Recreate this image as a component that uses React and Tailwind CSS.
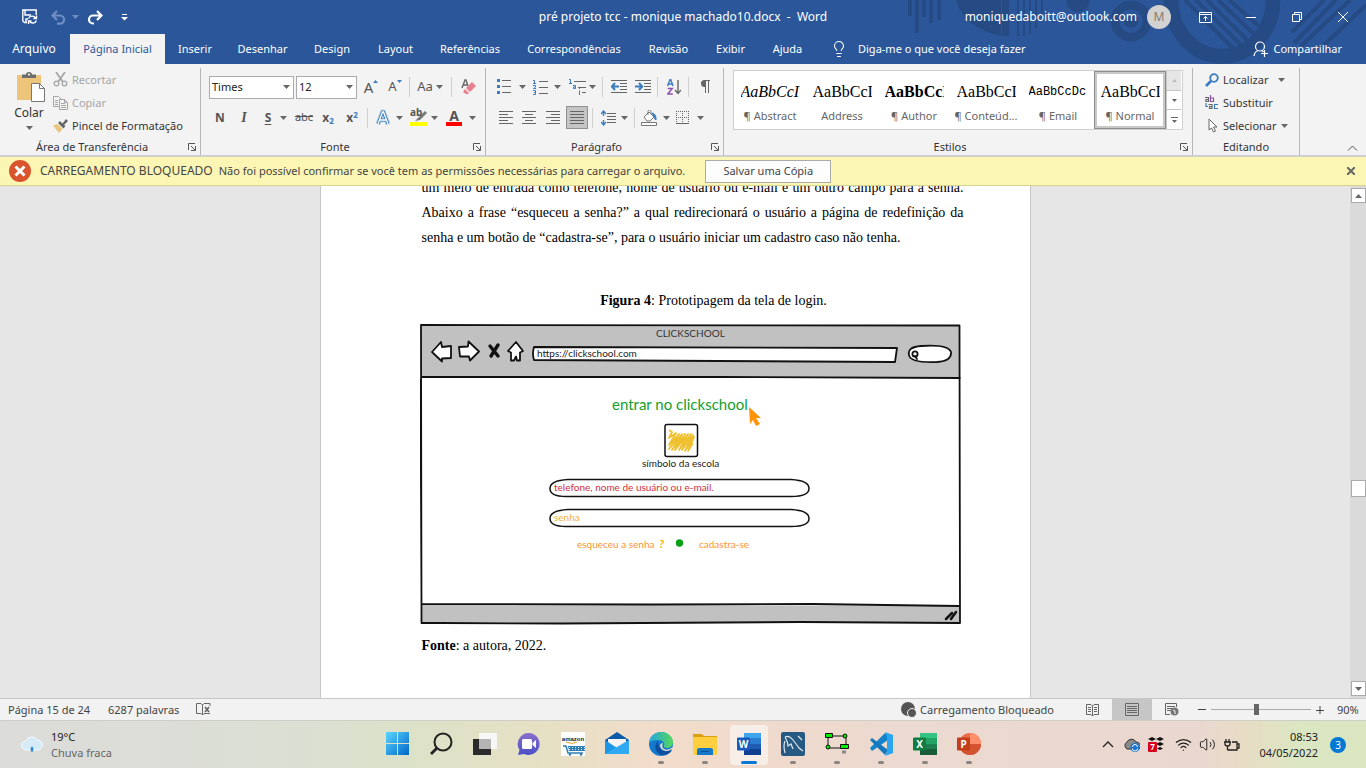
import React from "react";
import { Lightbulb, Search, Wifi, Volume2 } from "lucide-react";

const Caret = ({ dim }) => (
  <svg width="7" height="4" viewBox="0 0 7 4" className={dim ? "shrink-0 fill-[#6f8fc4]" : "shrink-0 fill-[#666]"} aria-hidden="true"><path d="M0 0h7L3.5 4z" /></svg>
);
const Sep = ({ className }) => <div className={`h-5 w-px bg-[#d0d0d0] ${className || ""}`} />;
const Tool = ({ label, className, children }) => (
  <button type="button" aria-label={label} className={`flex h-[23px] shrink-0 items-center justify-center [&>svg]:shrink-0 ${className || ""}`}>{children}</button>
);
const Launcher = () => (
  <button type="button" aria-label="Mais opções" className="flex w-4 justify-center">
    <svg width="8" height="8" viewBox="0 0 8 8" fill="none" stroke="#555"><path d="M.5 7V.5H7M3 3l4 4M7.5 3v4.5H3" /></svg>
  </button>
);

function Group({ title, width, launcher, children }) {
  return (
    <section className={`flex shrink-0 flex-col border-r border-[#b5b5b5] ${width}`}>
      <div className="h-[71px]">{children}</div>
      <div className="flex h-4 items-center">
        <h2 className="flex-1 text-center text-[11px] leading-4 text-[#333]">{title}</h2>
        {launcher && <Launcher />}
      </div>
    </section>
  );
}

function TitleBar() {
  return (
    <div className="grid h-[34px] grid-cols-[1fr_auto_1fr] items-center text-[12px] leading-4">
      <div className="flex items-center pl-[22px]">
        <button type="button" aria-label="Salvar">
          <svg width="16" height="16" viewBox="0 0 16 16" fill="none" stroke="#fff" strokeWidth="1.400"><path d="M5 13.500H2.500L.8 12V1h13.400v5M3 1v5h6M4 13.500V10h2" /><path d="M6.500 9.500a4 4 0 0 1 7-.5M14.500 6.500v3h-3M14.500 11.500a4 4 0 0 1-7 .8M6.500 15v-3h3" /></svg>
        </button>
        <button type="button" aria-label="Desfazer" className="ml-[13px] flex items-center gap-[5px]">
          <svg width="16" height="15" viewBox="0 0 16 15" fill="none" stroke="#6f8fc4" strokeWidth="2.200"><path d="M6 1 1.500 5.500 6 10M2 5.500h7a4 4 0 0 1 0 8.200H6" /></svg>
          <Caret dim />
        </button>
        <button type="button" aria-label="Refazer" className="ml-2">
          <svg width="16" height="15" viewBox="0 0 16 15" fill="none" stroke="#fff" strokeWidth="2.200"><path d="m10 1 4.500 4.500L10 10M14 5.500H6a4 4 0 0 0 0 8h1" /></svg>
        </button>
        <button type="button" aria-label="Personalizar" className="ml-[18px]">
          <svg width="7" height="7" viewBox="0 0 7 7" fill="#fff"><path d="M1 0h5v1H1zM0 3h7L3.500 6.500z" /></svg>
        </button>
      </div>
      <div className="whitespace-pre">pré projeto tcc - monique machado10.docx  -  Word</div>
      <div className="flex items-center justify-end">
        <span>moniquedaboitt@outlook.com</span>
        <span className="ml-[10px] flex size-6 items-center justify-center rounded-full bg-[#d2d2d2] text-[#8a7a6c]">M</span>
        <button type="button" aria-label="Opções da faixa" className="ml-[11px] flex h-8 w-[46px] items-center justify-center">
          <svg width="13" height="11" viewBox="0 0 13 11" fill="none" stroke="#fff"><path d="M.5.5h12v10H.5zM.5 2.500h12M6.500 9V4.500M4.500 6.500l2-2 2 2" /></svg>
        </button>
        <button type="button" aria-label="Minimizar" className="flex h-8 w-[46px] items-center justify-center">
          <svg width="10" height="1"><path d="M0 .5h10" stroke="#fff" /></svg>
        </button>
        <button type="button" aria-label="Restaurar" className="flex h-8 w-[46px] items-center justify-center">
          <svg width="10" height="10" fill="none" stroke="#fff"><path d="M.5 2.500h7v7h-7zM2.500 2.500v-2h7v7h-2" /></svg>
        </button>
        <button type="button" aria-label="Fechar" className="flex h-8 w-[46px] items-center justify-center">
          <svg width="10" height="10" fill="none" stroke="#fff"><path d="m0 0 10 10M10 0 0 10" /></svg>
        </button>
      </div>
    </div>
  );
}

const tabs = [
  ["Arquivo", "w-[70px] pr-0.5 text-[12px]"], ["Página Inicial", "w-[95px] bg-[#f3f3f3] text-[#2b579a]"], ["Inserir", "w-[60px]"], ["Desenhar", "w-[75px]"],
  ["Design", "w-[64px]"], ["Layout", "w-[63px]"], ["Referências", "w-[86px]"], ["Correspondências", "w-[122px]"],
  ["Revisão", "w-[67px]"], ["Exibir", "w-[57px]"], ["Ajuda", "w-[57px]"],
];

function Header() {
  return (
    <header className="relative shrink-0 overflow-hidden bg-[#2b579a] text-white">
      <svg className="absolute top-0 right-0" width="466" height="64" viewBox="900 0 466 64" aria-hidden="true" fill="#264b84">
        <path d="M908 0h4v16h-4zM915 0h4v33h-4zM922 0h4v17h-4zM929 0h4v23h-4zM937 0h4v20h-4zM956 0h45v36q-37-8-45-36zM1002 0h7v36h-7zM1017 0h2v36h-2zM1023 0h2v36h-2zM1029 0h2v34h-2zM1035 0h2v28h-2zM1041 0h2v19h-2zM1066 0h24q-2 12-12 12T1066 0z" />
        <circle cx="1131" cy="21" r="16" fill="none" stroke="#264b84" strokeWidth="9" /><circle cx="1131" cy="21" r="7" />
        <path d="M1171 0a49 54 0 1 0 102 0" fill="none" stroke="#264b84" strokeWidth="15" />
        <path d="m1185 0 54 54M1196 0l49 49M1207 0l43 43M1218 0l38 36M1229 0l30 26M1324 0l-32 32M1350 0l-49 46M1366 5l-42 40M1336 0l-42 43" stroke="#264b84" strokeWidth="4" />
      </svg>
      <div className="relative">
        <TitleBar />
        <nav className="flex h-[30px] text-[11px] leading-4">
          {tabs.map(([name, cls]) => <button key={name} type="button" className={`flex items-center justify-center whitespace-nowrap ${cls}`}>{name}</button>)}
          <button type="button" className="flex items-center gap-2.5 pl-3.5 whitespace-nowrap"><Lightbulb size={18} strokeWidth={1.400} />Diga-me o que você deseja fazer</button>
          <button type="button" className="mr-6 ml-auto flex items-center gap-1">
            <svg width="16" height="16" viewBox="0 0 16 16" fill="none" stroke="#fff" strokeWidth="1.200"><circle cx="7" cy="5.500" r="4.500" /><path d="M1 15c.4-3 2-5 4.500-5.500M8.500 9.500l2 1.500M8 12.500h7M11.500 9v7" /></svg>
            Compartilhar
          </button>
        </nav>
      </div>
    </header>
  );
}

function Clipboard() {
  return (
    <div className="flex">
      <button type="button" className="ml-[13px] flex w-8 flex-col items-center pt-1 text-[12px] leading-4 text-[#333]">
        <svg width="30" height="31" viewBox="0 0 30 31" className="ml-1"><path d="M1 3h24v25H1z" fill="#ecc57b" /><path d="M6 6V2.500h4a3 2.500 0 0 1 6 0h4V6z" fill="#6d6d6d" /><circle cx="13" cy="2.500" r="1" fill="#fff" /><path d="M15.500 11.500h8l5 5v13h-13z" fill="#fff" stroke="#777" /><path d="M23.500 11.500v5h5" fill="none" stroke="#777" /></svg>
        <span className="mt-0.5 mb-[5px]">Colar</span>
        <Caret />
      </button>
      <div className="flex flex-col pl-2 text-[11px] leading-[22px]">
        <button type="button" className="flex h-[23px] items-center gap-1 text-[#a6a6a6]">
          <svg width="15" height="15" viewBox="0 0 15 15" fill="none" stroke="#a6a6a6" strokeWidth="1.800"><path d="m3 0 7 10M12 0 5 10" /><circle cx="3.500" cy="11.500" r="2.300" strokeWidth="1.300" /><circle cx="11.500" cy="11.500" r="2.300" strokeWidth="1.300" /></svg>
          Recortar
        </button>
        <button type="button" className="flex h-[23px] items-center gap-1 text-[#a6a6a6]">
          <svg width="15" height="14" viewBox="0 0 15 14" fill="#f3f3f3" stroke="#a6a6a6"><path d="M.5.500h5l3 3v7h-8zM2 4.500h3M2 6.500h3M2 8.500h3" /><path d="M6.500 3.500h5l3 3v7h-8zM8 7.500h4M8 9.500h5M8 11.500h5M11.500 3.500v3h3" /></svg>
          Copiar
        </button>
        <button type="button" className="flex h-[23px] items-center gap-1 text-[#333]">
          <svg width="15" height="14" viewBox="0 0 15 14"><path d="M0 6.500 4.500 5l5 5L6 14z" fill="#ecc57b" /><path d="m5 4 2-2 2.500 2.500L13 0l2 2-4 4 1.500 1-2 2.500z" fill="#666" /></svg>
          Pincel de Formatação
        </button>
      </div>
    </div>
  );
}

function FontGroup() {
  return (
    <div className="pt-[7px] text-[#555]">
      <div className="flex h-6 items-center pl-2">
        <label className="relative flex h-[23px] w-[85px] items-center border border-[#ababab] bg-white">
          <select aria-label="Fonte" className="w-full appearance-none bg-transparent pl-0.5 text-[11px] text-[#222]"><option>Times</option></select>
          <span className="pointer-events-none absolute right-[3px]"><Caret /></span>
        </label>
        <label className="relative ml-0.5 flex h-[23px] w-[61px] items-center border border-[#ababab] bg-white">
          <select aria-label="Tamanho" className="w-full appearance-none bg-transparent pl-0.5 text-[11px] text-[#222]"><option>12</option></select>
          <span className="pointer-events-none absolute right-[3px]"><Caret /></span>
        </label>
        <Tool label="Aumentar fonte" className="ml-0.5 w-6 text-[15px]"><span>A</span><svg width="5" height="3" className="mb-3"><path d="M0 3h5L2.500 0z" fill="#3b7cbf" /></svg></Tool>
        <Tool label="Diminuir fonte" className="w-6 text-[13px]"><span>A</span><svg width="5" height="3" className="mb-3"><path d="M0 0h5L2.500 3z" fill="#3b7cbf" /></svg></Tool>
        <Sep className="ml-0.5" />
        <Tool label="Maiúsculas" className="ml-[7px] w-[26px] gap-[3px] text-[13px]">Aa<Caret /></Tool>
        <Sep className="ml-2" />
        <Tool label="Limpar" className="ml-2 w-4">
          <svg width="15" height="16" viewBox="0 0 15 16"><path d="m1 9 3-8h1l2 6M2 6h4" fill="none" stroke="#666" strokeWidth="1.400" /><path d="m5 9 6-6 4 4-6 6z" fill="#e8808f" /><path d="m4 10 4 4-1 1H5l-3-2z" fill="#e8808f" /></svg>
        </Tool>
      </div>
      <div className="mt-[7px] flex h-[23px] items-center pl-[7px]">
        <Tool label="Negrito" className="w-6 text-[12px] font-bold">N</Tool>
        <Tool label="Itálico" className="w-6 text-[14px] font-bold italic"><span className="font-['Liberation_Serif',serif]">I</span></Tool>
        <Tool label="Sublinhado" className="w-9 gap-[9px] pl-1 text-[12px] font-bold"><span className="underline underline-offset-2">S</span><Caret /></Tool>
        <Tool label="Tachado" className="w-6 text-[11px] line-through">abc</Tool>
        <Tool label="Subscrito" className="w-6 text-[12px] font-bold"><span>x<sub className="text-[8px] text-[#3b7cbf]">2</sub></span></Tool>
        <Tool label="Sobrescrito" className="w-6 text-[12px] font-bold"><span>x<sup className="text-[8px] text-[#3b7cbf]">2</sup></span></Tool>
        <Sep className="ml-[3px]" />
        <Tool label="Efeitos" className="ml-1 w-8 gap-1">
          <svg width="18" height="18" viewBox="0 0 18 18" fill="none"><path d="m4 15 4.500-12h1L14 15M6 11h6" stroke="#3b7cbf" strokeWidth="5" opacity=".25" /><path d="m4 15 4.500-12h1L14 15M6 11h6" stroke="#3b7cbf" strokeWidth="3.200" /><path d="m4 15 4.500-12h1L14 15M6 11h6" stroke="#fff" strokeWidth="1.300" /></svg>
          <Caret />
        </Tool>
        <Tool label="Realce" className="ml-1 w-8 gap-1">
          <span className="relative flex h-4 w-[17px] flex-col justify-end border-b-4 border-[#ff0]"><span className="absolute -top-1 left-0 text-[10px] leading-3 font-bold">ab</span><svg width="17" height="12"><path d="m15 1-7 7-3 3 5-1 7-7z" fill="#777" /></svg></span>
          <Caret />
        </Tool>
        <Tool label="Cor da fonte" className="ml-[5px] w-8 gap-[7px]">
          <span className="flex h-4 w-4 shrink-0 items-end justify-center border-b-4 border-[#f00] text-[14px] leading-3 font-bold">A</span>
          <Caret />
        </Tool>
      </div>
    </div>
  );
}

const Lines = ({ d }) => <svg width="14" height="13" viewBox="0 0 14 13" stroke="#666" fill="none"><path d={d} /></svg>;

function ParagraphGroup() {
  return (
    <div className="pt-[7px] text-[#555]">
      <div className="flex h-[23px] items-center pl-3">
        <Tool label="Marcadores" className="w-[27px] gap-2">
          <svg width="14" height="15" viewBox="0 0 14 15"><path d="M5 1.500h9M5 7.500h9M5 13.500h9" stroke="#666" /><path d="M0 0h3v3H0zM0 6h3v3H0zM0 12h3v3H0z" fill="#3b7cbf" /></svg><Caret />
        </Tool>
        <Tool label="Numeração" className="ml-2 w-7 gap-1.5">
          <svg width="15" height="16" viewBox="0 0 15 16" fill="none"><path d="M6 2.500h9M6 8.500h9M6 14.500h9" stroke="#666" /><path d="M0 1.500h1.500V4M0 4.500h3M0 6.500h2.500v1.500L.5 9.500H3M0 11.500h2.500v4H0M1 13.500h1.500" stroke="#3b7cbf" /></svg><Caret />
        </Tool>
        <Tool label="Vários níveis" className="ml-2 w-[27px] gap-[3px]">
          <svg width="17" height="16" viewBox="0 0 17 16" fill="none"><path d="M5 2.500h12M9 8.500h8M13 13.500h4" stroke="#666" /><path d="M0 .5h1.500V4M0 4.500h3M4 6.500h2.500v3H4.500V8h2M10.500 9v1M10.500 11.500V16" stroke="#3b7cbf" /></svg><Caret />
        </Tool>
        <Sep className="ml-1.5" />
        <Tool label="Diminuir recuo" className="ml-2 w-4"><svg width="16" height="13" viewBox="0 0 16 13" fill="none"><path d="M0 .5h16M9 3.500h7M9 6.500h7M9 9.500h7M0 12.500h16" stroke="#666" /><path d="M8 6.500H1M4 3 .8 6.500 4 10" stroke="#3b7cbf" strokeWidth="2" /></svg></Tool>
        <Tool label="Aumentar recuo" className="ml-2 w-4"><svg width="16" height="13" viewBox="0 0 16 13" fill="none"><path d="M0 .5h16M9 3.500h7M9 6.500h7M9 9.500h7M0 12.500h16" stroke="#666" /><path d="M0 6.500h7M4 3l3.200 3.500L4 10" stroke="#3b7cbf" strokeWidth="2" /></svg></Tool>
        <Sep className="ml-1.5" />
        <Tool label="Classificar" className="ml-2 w-4"><svg width="14" height="16" viewBox="0 0 14 16" fill="none" strokeWidth="1.400"><path d="M.5 7 3 .8h.8L6 7M1.500 5h4" stroke="#3b7cbf" /><path d="M.8 9.500h4.500l-4.500 5.500h5" stroke="#8e4fae" /><path d="M11 1v13M8 11l3 3.500 3-3.500" stroke="#666" /></svg></Tool>
        <Sep className="ml-1.5" />
        <Tool label="Mostrar tudo" className="ml-2 w-4"><svg width="10" height="13" viewBox="0 0 10 13"><path d="M4 0h6v1H9v12H8V1H6v12H5V7a3.500 3.500 0 0 1-1-7z" fill="#666" /></svg></Tool>
      </div>
      <div className="mt-2 flex h-[23px] items-center pl-2">
        <Tool label="Alinhar à esquerda" className="w-[23px]"><Lines d="M0 .5h14M0 3.500h9M0 6.500h14M0 9.500h9M0 12.500h14" /></Tool>
        <Tool label="Centralizar" className="w-6"><Lines d="M0 .5h14M3 3.500h8M0 6.500h14M3 9.500h8M0 12.500h14" /></Tool>
        <Tool label="Alinhar à direita" className="w-6"><Lines d="M0 .5h14M5 3.500h9M0 6.500h14M5 9.500h9M0 12.500h14" /></Tool>
        <Tool label="Justificar" className="ml-px w-[22px] border border-[#919191] bg-[#c5c5c5]"><Lines d="M0 .5h14M0 3.500h14M0 6.500h14M0 9.500h14M0 12.500h14" /></Tool>
        <Sep className="ml-1" />
        <Tool label="Espaçamento" className="ml-2 w-[26px] gap-[5px]"><svg width="15" height="16" viewBox="0 0 15 16" fill="none"><path d="M6 3.500h9M6 6.500h9M6 9.500h9M6 12.500h9" stroke="#666" /><path d="M2.500 1v5M2.500 10v5M0 4l2.500-3L5 4M0 12l2.500 3L5 12" stroke="#3b7cbf" strokeWidth="1.400" /></svg><Caret /></Tool>
        <Sep className="ml-[7px]" />
        <Tool label="Sombreamento" className="ml-1.5 w-7 gap-1.5"><svg width="16" height="16" viewBox="0 0 16 16" fill="none" stroke="#777"><path d="M.5 12.500h15v3H.5z" fill="#fff" /><path d="m3 7 5-5 5 5-4 4H6zM7 5V1.500a1.500 1.500 0 0 1 3 0V4" fill="#fff" /><path d="M11 3q4.500 1 4 7-2-1-2-4z" fill="#3b7cbf" stroke="#3b7cbf" /></svg><Caret /></Tool>
        <Tool label="Bordas" className="ml-2 w-[26px] gap-2"><svg width="13" height="13" viewBox="0 0 13 13" stroke="#666" fill="none"><path d="M.5 0v12M6.500 0v12M12.500 0v12M0 .5h13M0 6.500h13" strokeDasharray="1 1" /><path d="M0 12.500h13" /></svg><Caret /></Tool>
      </div>
    </div>
  );
}

const styles = [
  ["AaBbCcI", "¶ Abstract", "italic text-[16px] font-['Liberation_Serif',serif]"],
  ["AaBbCcI", "Address", "text-[16px] font-['Liberation_Serif',serif]"],
  ["AaBbCcI", "¶ Author", "text-[16px] font-bold font-['Liberation_Serif',serif]"],
  ["AaBbCcI", "¶ Conteúd...", "text-[16px] font-['Liberation_Serif',serif]"],
  ["AaBbCcDc", "¶ Email", "text-[12px] font-['Liberation_Mono',monospace]"],
  ["AaBbCcI", "¶ Normal", "text-[16px] font-['Liberation_Serif',serif]"],
];

function StylesGroup() {
  return (
    <div className="pt-0.5 pl-[9px]">
      <div className="flex h-[60px] w-[450px] border border-[#d0d0d0] bg-white">
        {styles.map(([sample, name, cls], i) => (
          <button key={name} type="button" className={`flex w-[72px] shrink-0 flex-col items-center ${i === 5 ? "border border-[#8c8c8a] p-0.5 outline-2 -outline-offset-3 outline-[#c8c8c6]" : "p-[3px]"}`}>
            <span className={`w-[59px] overflow-hidden pt-1.5 text-left leading-6 whitespace-nowrap text-black ${cls}`}>{sample}</span>
            <span className="pt-1 text-[11px] leading-4 whitespace-nowrap text-[#666]">{name}</span>
          </button>
        ))}
        <div className="flex w-[15px] flex-col border-l border-[#c6c6c6]">
          <button type="button" aria-label="Acima" className="flex flex-1 items-center justify-center bg-[#e6e6e6]"><svg width="5" height="3"><path d="M0 3h5L2.500 0z" fill="#bbb" /></svg></button>
          <button type="button" aria-label="Abaixo" className="flex flex-1 items-center justify-center border-y border-[#c6c6c6]"><svg width="5" height="3"><path d="M0 0h5L2.500 3z" fill="#666" /></svg></button>
          <button type="button" aria-label="Mais" className="flex flex-1 items-center justify-center"><svg width="7" height="6"><path d="M0 0h7v1H0zM1 3h5L3.500 6z" fill="#666" /></svg></button>
        </div>
      </div>
    </div>
  );
}

function EditGroup() {
  return (
    <div className="flex flex-col items-start pl-3 text-[11px] leading-[22px] text-[#333]">
      <button type="button" className="flex h-[23px] items-center gap-1"><svg width="14" height="14" viewBox="0 0 14 14" fill="none" stroke="#3b7cbf"><circle cx="9" cy="5" r="3.800" strokeWidth="1.800" /><path d="m6 8-5 5" strokeWidth="2.600" /></svg>Localizar<span className="ml-1.5"><Caret /></span></button>
      <button type="button" className="flex h-[23px] items-center gap-1">
        <svg width="14" height="15" viewBox="0 0 14 15" fill="none" stroke="#666" strokeWidth="1.200"><path d="M0 2.500h3.500v4H1v-2h2.500M3.500 9.500H7v4H4.500v-2H7" /><path d="M5.500 0v6.500h3v-3.500h-3" stroke="#8e4fae" /><path d="M13 9.500H9.500v4H13M1 8v3.500h2" stroke="#3b7cbf" /></svg>
        Substituir
      </button>
      <button type="button" className="flex h-[23px] items-center gap-1"><svg width="14" height="15" viewBox="0 0 14 15" fill="#fff" stroke="#666"><path d="M4 1v11l2.500-2L8.500 14l2-1-2-4H12z" /></svg><span>Selecionar</span><Caret /></button>
    </div>
  );
}

const ink = { fill: "none", stroke: "#111", strokeLinecap: "round", strokeLinejoin: "round" };

function LoginSketch() {
  return (
    <svg viewBox="419 323 542 302" width="542" height="302" role="img" aria-label="Protótipo da tela de login" className="font-[Lato,sans-serif]">
      <path d="M420 325h539v52H420zM420 604l539 2v17H420z" fill="#c1c1c1" />
      <g {...ink} strokeWidth="1.800">
        <path d="M420.500 325 958.500 325.500 959 623 800 622 560 623.500 440 623 420.500 623 420 325M420 377h300l239 1M421 604l230 .5 160-.5 147 2M419.500 380l1 220" />
        <g fill="#fff">
          <path d="M431 352l9-10 1 5 9-1v12l-9 .5v3zM458 347l9-.5.500-5 10.500 10-9 9-1-4h-9zM507 351l8-9 7 9-3 1.500v8h-3l-1-4-2 4h-3v-8z" />
          <path d="M533 347q-2 7 0 13l361 2 2-14zM908 355q-2-8 12-9 27-2 30 6 1 9-14 10-27 1-28-7" />
          <path d="M567 479.500h223q18 1 18 9 0 8-18 8H565q-16 0-16-8 0-8 18-9zM567 509.500h223q18 1 18 9 0 8-18 8H565q-16 0-16-8 0-8 18-9z" strokeWidth="1.500" />
          <rect x="664" y="424.500" width="32.500" height="32" rx="2" strokeWidth="1.500" />
        </g>
        <circle cx="914" cy="354" r="2.600" /><path d="m914 356 2 3" />
      </g>
      <path d="m489 346 8 10M497 345l-7 11" stroke="#111" strokeWidth="3.400" strokeLinecap="round" />
      <path d="m945 619 6-6M950 619l5-7" stroke="#111" strokeWidth="2.500" strokeLinecap="round" />
      <path d="m668 430 3 2-3 6 7-5-7 12 10-11-10 15 13-15-10 16 13-16-10 16 13-16-9 16 12-16-9 16 11-15-8 16 9-14-6 14 5-8" fill="none" stroke="#efc02f" strokeWidth="1.800" strokeLinejoin="round" />
      <path d="m748 407 12 11h-5l4 6-4 2-3-6-3 4z" fill="#ff9408" />
      <circle cx="678.500" cy="543" r="3.700" fill="#0a9f18" />
      <text x="655" y="337" fontSize="10" fill="#333">CLICKSCHOOL</text>
      <text x="536" y="357" fontSize="10" fill="#222">https://clickschool.com</text>
      <text x="611" y="410" fontSize="15" fill="#14a02c">entrar no clickschool</text>
      <text x="641" y="467" fontSize="10" fill="#222">símbolo da escola</text>
      <text x="553" y="491" fontSize="10" fill="#d32f3c">telefone, nome de usuário ou e-mail.</text>
      <text x="553" y="521" fontSize="10" fill="#f0b040">senha</text>
      <text x="576" y="548" fontSize="10" fill="#ff9432">esqueceu a senha</text>
      <text x="658" y="548" fontSize="12" fontWeight="bold" fontStyle="italic" fill="#f8b400">?</text>
      <text x="698" y="548" fontSize="10" fill="#ff9432">cadastra-se</text>
    </svg>
  );
}

function Scrollbar() {
  return (
    <div className="flex w-4 shrink-0 flex-col items-center bg-[#dadada] pt-0.5 pb-0.5">
      <button type="button" aria-label="Rolar para cima" className="flex size-[15px] items-center justify-center border border-[#ababab] bg-white"><svg width="7" height="4"><path d="M0 4h7L3.500 0z" fill="#666" /></svg></button>
      <div className="flex w-full flex-1 flex-col items-center">
        <div className="grow-[278]" />
        <div className="h-[17px] w-[15px] border border-[#ababab] bg-white" />
        <div className="grow-[185]" />
      </div>
      <button type="button" aria-label="Rolar para baixo" className="flex size-[15px] items-center justify-center border border-[#ababab] bg-white"><svg width="7" height="4"><path d="M0 0h7L3.500 4z" fill="#666" /></svg></button>
    </div>
  );
}

function Document() {
  return (
    <main className="flex min-h-0 flex-1 bg-[#e6e6e6]">
      <div className="flex flex-1 justify-center overflow-hidden">
        <article className="w-[711px] border-x border-[#c6c6c6] bg-white px-[101px] font-['Liberation_Serif',serif] text-[14px] leading-[25px] text-black">
          <div className="-mt-[11px] w-[542px]">
            <p className="whitespace-nowrap [text-align-last:justify]">um meio de entrada como telefone, nome de usuário ou e-mail e um outro campo para a senha.</p>
            <p className="whitespace-nowrap [text-align-last:justify]">Abaixo a frase “esqueceu a senha?” a qual redirecionará o usuário a página de redefinição da</p>
            <p className="whitespace-nowrap">senha e um botão de “cadastra-se”, para o usuário iniciar um cadastro caso não tenha.</p>
          </div>
          <figure className="w-[542px]">
            <figcaption className="pt-[38px] pb-[10px] pl-[42px] text-center"><b>Figura 4</b>: Prototipagem da tela de login.</figcaption>
            <div className="-ml-0.5"><LoginSketch /></div>
          </figure>
          <p className="pt-2"><b>Fonte</b>: a autora, 2022.</p>
        </article>
      </div>
      <Scrollbar />
    </main>
  );
}

function StatusBar() {
  return (
    <footer className="flex h-[22px] shrink-0 items-center border-t border-[#c6c6c6] bg-[#f2f2f2] text-[11px] leading-4 text-[#444]">
      <span className="w-[100px] pl-2">Página 15 de 24</span>
      <span className="w-[96px] pl-2">6287 palavras</span>
      <button type="button" aria-label="Revisão"><svg width="15" height="13" viewBox="0 0 15 13" fill="none" stroke="#666"><path d="M6.500 12V2L5 .5H.5v10H5L6.500 12 8 10.500h6M6.500 2 8 .5h6V3" /><path d="m9 4 4 5M13 4 9 9" strokeWidth="1.600" /></svg></button>
      <span className="ml-auto flex items-center gap-[3px]"><svg width="16" height="16"><circle cx="7" cy="7" r="7" fill="#555" /><circle cx="11" cy="11" r="4.500" fill="#555" stroke="#f2f2f2" /></svg>Carregamento Bloqueado</span>
      <button type="button" aria-label="Modo de leitura" className="ml-[18px] flex h-[21px] w-10 items-center justify-center"><svg width="13" height="12" viewBox="0 0 13 12" fill="none" stroke="#666"><path d="M6.500 12V2L5 .5H.5v10H5L6.500 12 8 10.500h4.500V.5H8L6.500 2M2 3.500h3M2 5.500h3M2 7.500h3M8 3.500h3M8 5.500h3M8 7.500h3" /></svg></button>
      <button type="button" aria-label="Layout de impressão" className="flex h-[21px] w-10 items-center justify-center bg-[#c6c6c6]"><svg width="14" height="13" viewBox="0 0 14 13" fill="none" stroke="#666"><path d="M.5.500h13v12H.5zM2 3.500h10M2 5.500h10M2 7.500h10M2 9.500h10" /></svg></button>
      <button type="button" aria-label="Layout da web" className="flex h-[21px] w-10 items-center justify-center"><svg width="14" height="13" viewBox="0 0 14 13" fill="none" stroke="#666"><path d="M5 11.500H.5V.5h11V4M2 3.500h8M2 5.500h5M2 7.500h4" /><circle cx="9.500" cy="8.500" r="4" fill="#777" stroke="none" /><path d="m8 7 2 1v3" stroke="#f2f2f2" /></svg></button>
      <button type="button" aria-label="Reduzir" className="ml-1 flex w-3 justify-center"><svg width="8" height="1"><path d="M0 .5h8" stroke="#444" /></svg></button>
      <label className="relative ml-[3px] flex h-4 w-[100px] items-center">
        <input type="range" aria-label="Zoom" min="0" max="100" defaultValue="45" className="h-4 w-full appearance-none bg-[linear-gradient(#aaa,#aaa)] bg-[length:100%_1px] bg-center bg-no-repeat [&::-webkit-slider-thumb]:h-[11px] [&::-webkit-slider-thumb]:w-[5px] [&::-webkit-slider-thumb]:appearance-none [&::-webkit-slider-thumb]:bg-[#666]" />
      </label>
      <button type="button" aria-label="Ampliar" className="ml-[5px] flex w-2 justify-center"><svg width="8" height="8"><path d="M0 4.500h8M4 0v8" stroke="#444" /></svg></button>
      <span className="w-[42px] pl-[13px]">90%</span>
    </footer>
  );
}

const OfficeIcon = ({ letter, dark, mid, light, tag }) => (
  <svg width="24" height="22" viewBox="0 0 24 22"><path d="M7 0h17v6H7z" fill={light} /><path d="M7 5h17v6H7z" fill={mid} /><path d="M7 11h17v11H7z" fill={dark} /><path d="M7 11h17v5H7z" fill={mid} opacity=".5" /><rect y="4.500" width="13" height="13" rx="1" fill={tag} /><text x="6.500" y="14.500" textAnchor="middle" fontSize="10" fontWeight="bold" fill="#fff">{letter}</text></svg>
);

const apps = [
  ["Iniciar", 0, <svg width="23" height="23"><defs><linearGradient id="win" x2="1" y2="1"><stop stopColor="#5cd6ff" /><stop offset="1" stopColor="#0067c9" /></linearGradient></defs><path d="M0 0h11v11H0zM12 0h11v11H12zM0 12h11v11H0zM12 12h11v11H12z" fill="url(#win)" /></svg>],
  ["Pesquisar", 0, <svg width="24" height="24" fill="none" stroke="#222"><circle cx="14" cy="10" r="8.500" strokeWidth="2" /><path d="m8 16-6 6" strokeWidth="2.800" /></svg>],
  ["Visão de tarefas", 0, <svg width="24" height="24"><path d="M0 7h18v16H0z" fill="#2b2b2b" /><path d="M6 1h18v16H6z" fill="#f7f7f7" /><path d="M6 7h12v10H6z" fill="#b5b5b5" /></svg>],
  ["Chat", 0, <svg width="24" height="24"><defs><linearGradient id="cht" x2="0" y2="1"><stop stopColor="#8a6fc9" /><stop offset="1" stopColor="#4b4fc9" /></linearGradient></defs><path d="M12 1a11 11 0 1 1-5 21l-6 1 1.500-5A11 11 0 0 1 12 1z" fill="url(#cht)" /><rect x="5" y="7" width="10" height="10" rx="1.500" fill="#fff" /><path d="m15.500 11 3.500-3v8l-3.500-3z" fill="#fff" /></svg>],
  ["Amazon", 0, <svg width="24" height="24"><path d="M0 0h24v24H0z" fill="#fff" /><text x="12" y="9" textAnchor="middle" fontSize="6" fontWeight="bold" fill="#222" className="font-['Liberation_Sans',sans-serif]">amazon</text><path d="M5 10q6 3 11 0" stroke="#f79a1e" fill="none" /><path d="M2 14h3l2 7h15" stroke="#2f7fb5" strokeWidth="1.500" fill="none" /><path d="M7 14h17v5H8z" fill="#2f7fb5" /><path d="M8 15.500h16M8 17.500h16" stroke="#cfe3f0" strokeDasharray="1 2" /><circle cx="9" cy="22.500" r="1.300" fill="#2f7fb5" /><circle cx="20" cy="22.500" r="1.300" fill="#2f7fb5" /></svg>],
  ["Email", 0, <svg width="24" height="23"><path d="M0 8 12 0l12 8v3H0z" fill="#0a5ba8" /><path d="M3 7h18v9H3z" fill="#f4f4f4" /><path d="m0 8 12 8 12-8v14H0z" fill="#1e96e6" /><path d="m0 22 24-14v14z" fill="#2fa9f2" /></svg>],
  ["Edge", 1, <svg width="24" height="24"><defs><linearGradient id="edg" x2="1"><stop stopColor="#23a5e0" /><stop offset="1" stopColor="#55d85a" /></linearGradient></defs><circle cx="12" cy="12" r="12" fill="#1479cc" /><path d="M0 11C1 4 6 0 12 0c7 0 12 5 12 10 0 4-3 6-6 6-2 0-4-1-3-2 1-4-2-6-6-6-4 0-7 1-9 3z" fill="url(#edg)" /><path d="M9 9c-6 6-1 14 6 14 4 0 7-3 8-5-6 3-14 1-14-9z" fill="#0b4f9e" /><path d="M24 15q-5 4-9 2-3-2-1-6-2 0-3 2 0 5 6 6 3 0 6-2z" fill="#f0dcc8" /></svg>],
  ["Explorador", 1, <svg width="24" height="22"><path d="M0 1h9l2 2h13v6H0z" fill="#dc9e15" /><rect y="4" width="24" height="18" rx="1" fill="#ffcf3f" /><path d="M4 22v-5q0-2 2-2h12q2 0 2 2v5z" fill="#1679c7" /><path d="M8 18h8v1H8z" fill="#0b5394" /></svg>],
  ["Word", 2, <OfficeIcon letter="W" light="#41a5ee" mid="#2b7cd3" dark="#103f91" tag="#185abd" />],
  ["MySQL Workbench", 1, <svg width="24" height="24"><rect width="24" height="24" rx="2" fill="#275a82" /><path d="M4 21q-2-8 0-12M4 5q4-2 8 3 4 5 6 8l4 3M4 5q3 5 3 9l3-2 2 5M17 4l4 4" stroke="#dfe9ef" fill="none" strokeWidth="1.200" /></svg>],
  ["Diagramas", 1, <svg width="24" height="24" fill="#00f000" stroke="#111"><path d="M5 4h16v12H3V4" fill="none" /><path d="M.5 1.500h7v4h-7zM15.500 12.500h8v4h-8z" /><circle cx="20" cy="4" r="2" /><circle cx="3" cy="15" r="2" /><path d="M17 20h4" strokeWidth="3" stroke="#888" /></svg>],
  ["VS Code", 1, <svg width="24" height="24"><path d="m1 16 15-15 3 3v4L3 19z" fill="#1583cc" /><path d="m1 8 2-2 16 12-3 5z" fill="#1478bd" /><path d="m16 0 8 3v18l-8 3 2-4V5z" fill="#2aa5ef" /></svg>],
  ["Excel", 1, <OfficeIcon letter="X" light="#33c481" mid="#21a366" dark="#185c37" tag="#107c41" />],
  ["PowerPoint", 1, <svg width="24" height="22"><circle cx="13" cy="11" r="11" fill="#ed6c47" /><path d="M13 0a11 11 0 0 1 11 11H13z" fill="#ff8f6b" /><path d="M24 11a11 11 0 0 1-22 0z" fill="#d35230" /><rect y="4.500" width="13" height="13" rx="1" fill="#c43e1c" /><text x="6.500" y="14.500" textAnchor="middle" fontSize="10" fontWeight="bold" fill="#fff">P</text></svg>],
];

function Taskbar() {
  return (
    <div className="grid h-12 shrink-0 grid-cols-[1fr_auto_1fr] items-center border-t border-[#cfcfca] bg-[linear-gradient(90deg,#dcdcda_0%,#dbdfd3_22%,#dce2c8_30%,#e6e0c4_40%,#f2dccb_48%,#ecd9cf_65%,#ead8d0_88%,#e8dcc4_91%,#dbe6c2_95%,#d9e6c0_100%)] text-[12px] leading-4 text-[#222]">
      <div className="flex items-center gap-2 pl-[21px]">
        <svg width="22" height="18" viewBox="0 0 22 18"><path d="M5 14a4.500 4.500 0 0 1 0-9 6 6 0 0 1 11-1 5 5 0 0 1 1 10z" fill="#d5ebf7" stroke="#f4fafd" /><path d="M11 10q3 4 0 6-3-2 0-6z" fill="#2f87dc" /></svg>
        <div className="text-[11px]"><div>19°C</div><div className="text-[#666]">Chuva fraca</div></div>
      </div>
      <div className="flex">
        {apps.map(([name, state, icon]) => (
          <button key={name} type="button" aria-label={name} className="flex w-11 justify-center">
            <span className={`flex h-10 w-[38px] flex-col items-center rounded pt-[7px] ${state === 2 ? "bg-[#f7eee8]" : ""}`}>
              <span className="flex h-6 items-center">{icon}</span>
              {state > 0 && <span className={`mt-[5px] h-[3px] shrink-0 rounded-full ${state === 2 ? "w-4 bg-[#0b78d4]" : "w-1.5 bg-[#8a8581]"}`} />}
            </span>
          </button>
        ))}
      </div>
      <div className="flex items-center justify-end pr-5">
        <svg width="12" height="7" fill="none" stroke="#222" strokeWidth="1.300"><path d="m1 6 5-5 5 5" /></svg>
        <svg width="17" height="14" className="ml-[9px]"><path d="M4 11a4 4 0 0 1 0-7 5 5 0 0 1 9 0 4 4 0 0 1 3 7z" fill="#8a8a8a" stroke="#333" /><circle cx="12" cy="9.500" r="4.500" fill="#1673cf" /><path d="M9.500 9a2.500 2.500 0 0 1 5 0M14.500 10.500a2.500 2.500 0 0 1-5 0" stroke="#fff" fill="none" /></svg>
        <svg width="16" height="16" className="ml-2"><path d="m4 0 4 2-4 2-4-2zM12 0l4 2-4 2-4-2zM12 5l4 2-4 2-4-2zM12 10l3 1.500-3 1.500-3-1.500z" fill="#111" /><rect y="5" width="9" height="10" rx="1" fill="#d8001c" /><text x="4.500" y="13" textAnchor="middle" fontSize="8" fontWeight="bold" fill="#fff">7</text></svg>
        <Wifi size={17} strokeWidth={1.800} className="ml-[11px]" />
        <Volume2 size={17} strokeWidth={1.400} className="ml-[7px]" />
        <svg width="17" height="14" className="ml-[7px]" fill="none" stroke="#222" strokeWidth="1.300"><path d="M3 1v3M6 1v3M1 4h7M2 4v2q0 2 2.500 2T7 6V4M4.500 8v4M4.500 12h9.500V4H9M14 6h2v4h-2" /></svg>
        <div className="ml-3 w-[66px] text-right text-[11px]"><div>08:53</div><div>04/05/2022</div></div>
        <span className="ml-3 flex size-4 items-center justify-center rounded-full bg-[#0078d4] text-[10px] text-white">3</span>
      </div>
    </div>
  );
}

export default function App() {
  return (
    <div className="flex h-screen flex-col overflow-hidden font-['Noto_Sans',sans-serif]">
      <Header />
      <div className="flex h-[93px] shrink-0 border-b-2 border-[#cfcfcf] bg-[#f3f3f3] pt-1">
        <Group title="Área de Transferência" width="w-[201px]" launcher><Clipboard /></Group>
        <Group title="Fonte" width="w-[285px]" launcher><FontGroup /></Group>
        <Group title="Parágrafo" width="w-[238px]" launcher><ParagraphGroup /></Group>
        <Group title="Estilos" width="w-[469px]" launcher><StylesGroup /></Group>
        <Group title="Editando" width="w-[107px]"><EditGroup /></Group>
        <button type="button" aria-label="Recolher" className="mt-auto mr-2 mb-1 ml-auto"><svg width="11" height="6" fill="none" stroke="#555"><path d="m1 5.500 4.500-4.500L10 5.500" /></svg></button>
      </div>
      <div className="flex h-[29px] shrink-0 items-center border-b border-[#d8d48c] bg-[#fcf6b4] pl-[9px] text-[11px] leading-4 text-[#444]">
        <svg width="22" height="22"><circle cx="11" cy="11" r="11" fill="#d9532c" /><path d="m6.500 6.500 9 9M15.500 6.500l-9 9" stroke="#fff" strokeWidth="3" /></svg>
        <span className="ml-[9px] text-[12px] whitespace-nowrap">CARREGAMENTO BLOQUEADO</span>
        <span className="ml-1.5 whitespace-nowrap">Não foi possível confirmar se você tem as permissões necessárias para carregar o arquivo.</span>
        <button type="button" className="ml-5 h-[23px] w-[126px] border border-[#ababab] bg-[#fdfdfd]">Salvar uma Cópia</button>
        <button type="button" aria-label="Fechar aviso" className="mr-[11px] ml-auto"><svg width="8" height="8"><path d="m0 0 8 8M8 0 0 8" stroke="#666" strokeWidth="2" /></svg></button>
      </div>
      <Document />
      <StatusBar />
      <Taskbar />
    </div>
  );
}
